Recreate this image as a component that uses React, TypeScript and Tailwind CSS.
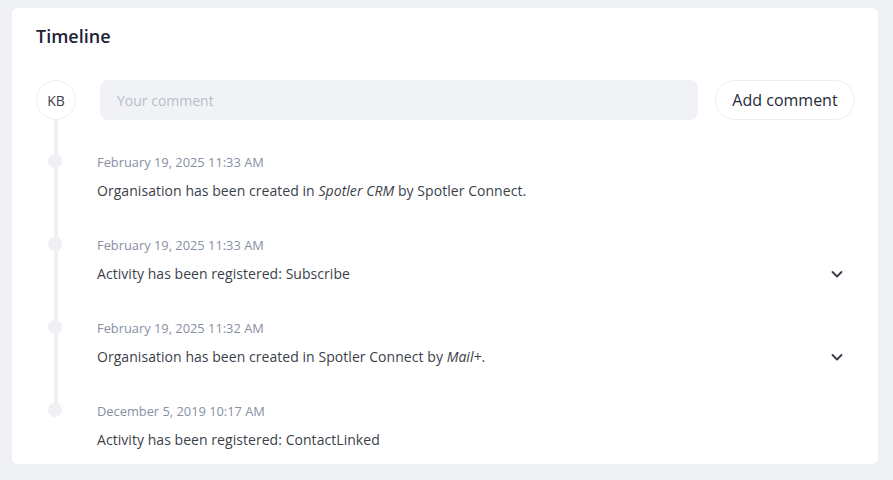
import React from 'react';

const items = [
  {
    date: 'February 19, 2025 11:33 AM',
    text: (
      <>
        Organisation has been created in <em>Spotler CRM</em> by Spotler Connect.
      </>
    ),
    expandable: false,
  },
  {
    date: 'February 19, 2025 11:33 AM',
    text: <>Activity has been registered: Subscribe</>,
    expandable: true,
  },
  {
    date: 'February 19, 2025 11:32 AM',
    text: (
      <>
        Organisation has been created in Spotler Connect by <em>Mail+</em>.
      </>
    ),
    expandable: true,
  },
  {
    date: 'December 5, 2019 10:17 AM',
    text: <>Activity has been registered: ContactLinked</>,
    expandable: false,
  },
];

function Chevron() {
  return (
    <svg width="14" height="14" viewBox="0 0 14 14" fill="none">
      <path d="M2.5 5l4.5 4.5L11.5 5" stroke="#353a47" strokeWidth="1.8" strokeLinecap="round" strokeLinejoin="round" />
    </svg>
  );
}

export default function App() {
  return (
    <div className="min-h-[480px] bg-[#eff0f4] px-[12px] pt-[8px] font-['Open_Sans',sans-serif]">
      <div className="w-[866px] h-[456px] rounded-[6px] bg-white pl-[24px] pr-[23px] pt-[14px]">
        <h2 className="text-[18px] leading-[28px] font-semibold text-[#1d2236]">Timeline</h2>

        <div className="mt-[30px] flex items-center">
          <div className="flex h-[40px] w-[40px] shrink-0 items-center justify-center rounded-full border border-[#eceef2] text-[14px] text-[#3b3f4a]">
            KB
          </div>
          <input
            placeholder="Your comment"
            className="ml-[24px] h-[40px] flex-1 rounded-[8px] bg-[#f1f2f6] px-[17px] text-[14px] text-[#333] outline-none placeholder:text-[#b8bdca]"
          />
          <button className="ml-[17px] h-[40px] w-[140px] rounded-full border border-[#eceef2] bg-white text-[16px] text-[#252a3a]">
            Add comment
          </button>
        </div>

        <div className="relative pt-[32px]">
          <div className="absolute left-[18px] top-0 h-[291px] w-[4px] bg-[#eef0f4]" />
          <div className="flex flex-col gap-[34px]">
            {items.map((item, i) => (
              <div key={i} className="relative flex">
                <div className="absolute left-[12px] top-[2px] h-[14px] w-[14px] rounded-full bg-[#eef0f4]" />
                <div className="ml-[61px] flex flex-1 flex-col">
                  <div className="text-[12.85px] leading-[20px] text-[#8790a3]">{item.date}</div>
                  <div className="mt-[9px] flex items-center justify-between leading-[20px]">
                    <span className="text-[14px] tracking-[0.05px] text-[#3b3f4a]">{item.text}</span>
                    {item.expandable ? (
                      <span className="mr-[11px] flex h-[20px] items-center">
                        <Chevron />
                      </span>
                    ) : null}
                  </div>
                </div>
              </div>
            ))}
          </div>
        </div>
      </div>
    </div>
  );
}
